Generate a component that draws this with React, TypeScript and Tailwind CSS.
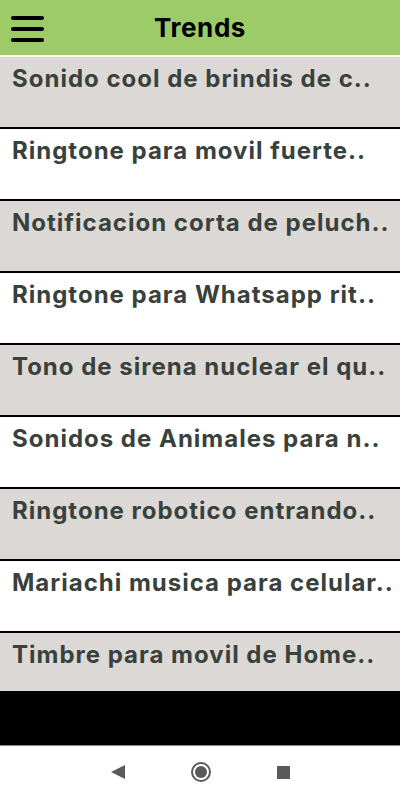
import React from 'react';

const items = [
  'Sonido cool de brindis de c..',
  'Ringtone para movil fuerte..',
  'Notificacion corta de peluch..',
  'Ringtone para Whatsapp rit..',
  'Tono de sirena nuclear el qu..',
  'Sonidos de Animales para n..',
  'Ringtone robotico entrando..',
  'Mariachi musica para celular..',
  'Timbre para movil de Home..',
];

export default function App() {
  return (
    <div className="w-[400px] h-[800px] flex flex-col bg-white overflow-hidden" style={{ fontFamily: 'Inter, "Open Sans", sans-serif' }}>
      {/* App bar */}
      <header className="relative h-[55px] shrink-0 bg-[#9ccb68] flex items-center justify-center">
        <button type="button" className="absolute left-[11px] top-[16px] flex flex-col gap-[7px]" aria-label="Menu">
          <span className="block w-[33px] h-[4px] rounded-full bg-black" />
          <span className="block w-[33px] h-[4px] rounded-full bg-black" />
          <span className="block w-[33px] h-[4px] rounded-full bg-black" />
        </button>
        <h1 className="text-[26px] font-bold text-black tracking-[0.6px] leading-none">Trends</h1>
      </header>
      <div className="h-[2px] shrink-0 bg-white" />

      {/* List */}
      <div className="h-[634px] shrink-0 overflow-hidden">
        {items.map((t, i) => (
          <div
            key={t}
            className={`h-[72px] border-b-2 border-black px-[12px] pt-[8px] ${i % 2 === 0 ? 'bg-[#dcd8d5]' : 'bg-white'}`}
          >
            <p className="text-[24px] leading-[28px] font-bold text-[#38413c] tracking-[1px] whitespace-nowrap">{t}</p>
          </div>
        ))}
      </div>

      {/* black gap */}
      <div className="h-[55px] shrink-0 bg-black border-b border-[#8a8a8a]" />

      {/* Navigation bar */}
      <nav className="flex-1 bg-white flex items-center justify-center gap-[66px] pb-[2px]">
        <svg width="14" height="14" viewBox="0 0 14 14" aria-hidden="true">
          <polygon points="0,7 14,0 14,14" fill="#5a5a5a" />
        </svg>
        <span className="w-[20px] h-[20px] rounded-full border-[2px] border-[#5a5a5a] flex items-center justify-center">
          <span className="w-[12px] h-[12px] rounded-full bg-[#5a5a5a]" />
        </span>
        <span className="w-[13px] h-[13px] bg-[#5a5a5a]" />
      </nav>
    </div>
  );
}
